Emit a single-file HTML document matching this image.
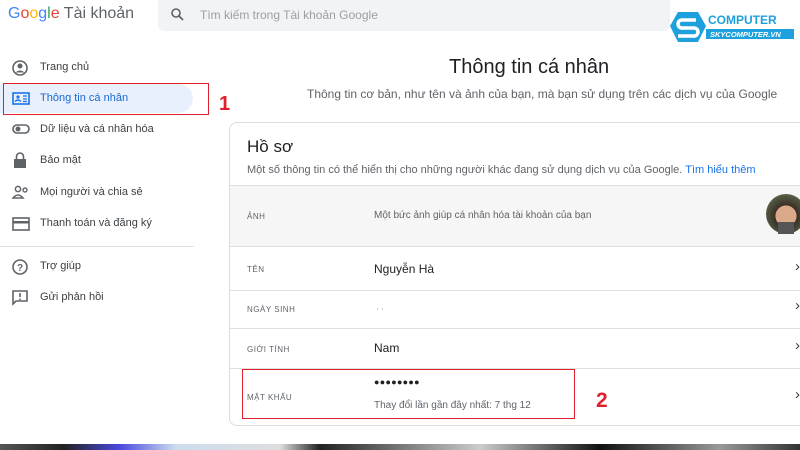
<!DOCTYPE html><html><head><meta charset="utf-8"><style>
body{margin:0;width:800px;height:450px;overflow:hidden;background:#fff;font-family:"Liberation Sans",sans-serif;position:relative;color:#202124}
.a{position:absolute}
.nav{font-size:11px;color:#3c4043}
.lbl{font-size:8px;color:#5f6368;letter-spacing:.5px}
.val{font-size:12px;color:#202124}
.hr{height:1px;background:#e0e0e0}
.chev{font-size:15px;color:#3c4043}
</style></head><body>
<div class="a" style="left:8px;top:5px;font-size:16px"><span style="color:#4285f4">G</span><span style="color:#ea4335">o</span><span style="color:#fbbc05">o</span><span style="color:#4285f4">g</span><span style="color:#34a853">l</span><span style="color:#ea4335">e</span> <span style="color:#5f6368">Tài khoản</span></div>
<div class="a" style="left:158px;top:0;width:512px;height:31px;background:#f1f3f4;border-radius:0 0 6px 6px"></div>
<svg class="a" style="left:171px;top:8px" width="13" height="13" viewBox="0 0 13 13"><circle cx="5" cy="5" r="4" fill="none" stroke="#5f6368" stroke-width="1.6"/><path d="M8 8l4 4" stroke="#5f6368" stroke-width="1.8"/></svg>
<div class="a" style="left:200px;top:8px;font-size:12px;color:#9aa0a6">Tìm kiếm trong Tài khoản Google</div>
<svg class="a" style="left:668px;top:10px" width="132" height="36" viewBox="0 0 132 36"><polygon points="10,2 30,2 38,16 30,32 10,32 2,16" fill="#1ea0dc"/><path d="M28 10H14a4 4 0 000 8h12a4 4 0 010 8H10" fill="none" stroke="#fff" stroke-width="3.5"/><rect x="38" y="19" width="88" height="10" fill="#1ea0dc"/><text x="40" y="14" font-family="Liberation Sans" font-weight="bold" font-size="12" fill="#1ea0dc">COMPUTER</text><text x="42" y="27" font-family="Liberation Sans" font-weight="bold" font-style="italic" font-size="7.5" fill="#fff">SKYCOMPUTER.VN</text></svg>
<div class="a" style="left:0;top:84px;width:193px;height:29px;background:#e8f0fe;border-radius:0 15px 15px 0"></div>
<div class="a" style="left:3px;top:83px;width:204px;height:30px;border:1.5px solid #e0202c"></div>
<div class="a" style="left:219px;top:93px;font-size:20px;font-weight:bold;color:#e0202c">1</div>
<svg class="a" style="left:12px;top:60px" width="16" height="16"><circle cx="8" cy="8" r="7" fill="none" stroke="#5f6368" stroke-width="1.6"/><circle cx="8" cy="6" r="2.5" fill="#5f6368"/><path d="M3.5 12.5q4.5-4 9 0" fill="#5f6368"/></svg>
<div class="a nav" style="left:40px;top:61px">Trang chủ</div>
<svg class="a" style="left:12px;top:91px" width="18" height="14"><rect x="1" y="2" width="16" height="11" fill="none" stroke="#1a73e8" stroke-width="1.6"/><circle cx="6" cy="6" r="1.6" fill="#1a73e8"/><path d="M3 10.5q3-3 6 0M11 5h4M11 8h4M11 10.5h4" stroke="#1a73e8" stroke-width="1.3" fill="none"/></svg>
<div class="a nav" style="left:40px;top:92px;color:#1967d2">Thông tin cá nhân</div>
<svg class="a" style="left:12px;top:124px" width="18" height="10"><rect x="1" y="1" width="16" height="8" rx="4" fill="none" stroke="#5f6368" stroke-width="1.6"/><circle cx="6" cy="5" r="2.5" fill="#5f6368"/></svg>
<div class="a nav" style="left:40px;top:123px">Dữ liệu và cá nhân hóa</div>
<svg class="a" style="left:13px;top:152px" width="14" height="17"><rect x="1" y="7" width="12" height="9" fill="#5f6368"/><path d="M3.5 7V4.5a3.5 3.5 0 017 0V7" fill="none" stroke="#5f6368" stroke-width="1.6"/></svg>
<div class="a nav" style="left:40px;top:154px">Bảo mật</div>
<svg class="a" style="left:12px;top:185px" width="18" height="14"><circle cx="6" cy="4" r="2.6" fill="none" stroke="#5f6368" stroke-width="1.5"/><path d="M1 13q5-6 10 0z" fill="none" stroke="#5f6368" stroke-width="1.5"/><circle cx="13" cy="5" r="2" fill="none" stroke="#5f6368" stroke-width="1.4"/></svg>
<div class="a nav" style="left:40px;top:186px">Mọi người và chia sẻ</div>
<svg class="a" style="left:12px;top:217px" width="18" height="14"><rect x="1" y="1" width="16" height="12" fill="none" stroke="#5f6368" stroke-width="1.6"/><rect x="1" y="4" width="16" height="2.5" fill="#5f6368"/></svg>
<div class="a nav" style="left:40px;top:217px">Thanh toán và đăng ký</div>
<div class="a hr" style="left:0;top:246px;width:194px"></div>
<svg class="a" style="left:12px;top:259px" width="16" height="16"><circle cx="8" cy="8" r="7" fill="none" stroke="#5f6368" stroke-width="1.6"/><text x="5" y="12" font-size="10" font-family="Liberation Sans" font-weight="bold" fill="#5f6368">?</text></svg>
<div class="a nav" style="left:40px;top:260px">Trợ giúp</div>
<svg class="a" style="left:12px;top:290px" width="16" height="16"><path d="M1 1h14v10H4l-3 3z" fill="none" stroke="#5f6368" stroke-width="1.6"/><path d="M8 3v4M8 8.5v1.5" stroke="#5f6368" stroke-width="1.6"/></svg>
<div class="a nav" style="left:40px;top:291px">Gửi phản hồi</div>
<div class="a" style="left:449px;top:56px;font-size:20px;color:#202124">Thông tin cá nhân</div>
<div class="a" style="left:307px;top:87px;font-size:12px;color:#5f6368">Thông tin cơ bản, như tên và ảnh của bạn, mà bạn sử dụng trên các dịch vụ của Google</div>
<div class="a" style="left:229px;top:122px;width:580px;height:302px;border:1px solid #dadce0;border-radius:8px"></div>
<div class="a" style="left:247px;top:137px;font-size:17px">Hồ sơ</div>
<div class="a" style="left:247px;top:164px;font-size:11px;color:#5f6368">Một số thông tin có thể hiển thị cho những người khác đang sử dụng dịch vụ của Google. <span style="color:#1a73e8">Tìm hiểu thêm</span></div>
<div class="a" style="left:230px;top:185px;width:570px;height:60px;background:#f6f6f6;border-top:1px solid #e0e0e0;border-bottom:1px solid #e0e0e0"></div>
<div class="a lbl" style="left:247px;top:212px">ẢNH</div>
<div class="a" style="left:374px;top:210px;font-size:10px;color:#5f6368">Một bức ảnh giúp cá nhân hóa tài khoản của bạn</div>
<div class="a" style="left:766px;top:194px;width:40px;height:40px;border-radius:50%;background:radial-gradient(circle at 50% 55%,#d9a98a 0 35%,#3a2e26 36%,#5b6a4c 80%)"></div>
<div class="a" style="left:778px;top:222px;width:16px;height:12px;background:#555"></div>
<div class="a lbl" style="left:247px;top:265px">TÊN</div><div class="a val" style="left:374px;top:262px">Nguyễn Hà</div><div class="a chev" style="left:795px;top:258px">›</div>
<div class="a hr" style="left:230px;top:290px;width:570px"></div>
<div class="a lbl" style="left:247px;top:305px">NGÀY SINH</div><div class="a" style="left:376px;top:301px;font-size:9px;color:#bbb">,  ,</div><div class="a chev" style="left:795px;top:297px">›</div>
<div class="a hr" style="left:230px;top:328px;width:570px"></div>
<div class="a lbl" style="left:247px;top:345px">GIỚI TÍNH</div><div class="a val" style="left:374px;top:341px">Nam</div><div class="a chev" style="left:795px;top:337px">›</div>
<div class="a hr" style="left:230px;top:368px;width:570px"></div>
<div class="a lbl" style="left:247px;top:393px">MẬT KHẨU</div><div class="a" style="left:374px;top:377px;font-size:9px;font-weight:bold;letter-spacing:0.3px">●●●●●●●●</div>
<div class="a" style="left:374px;top:400px;font-size:10px;color:#5f6368">Thay đổi lần gần đây nhất: 7 thg 12</div><div class="a chev" style="left:795px;top:386px">›</div>
<div class="a" style="left:242px;top:369px;width:331px;height:48px;border:1.5px solid #e0202c"></div>
<div class="a" style="left:596px;top:389px;font-size:21px;font-weight:bold;color:#e0202c">2</div>
<div class="a" style="left:0;top:444px;width:800px;height:6px;background:linear-gradient(90deg,#555 0,#222 8%,#4a4ae0 15%,#cde 22%,#ddd 35%,#222 40%,#ccc 60%,#111 75%,#999 90%,#333)"></div>
</body></html>
